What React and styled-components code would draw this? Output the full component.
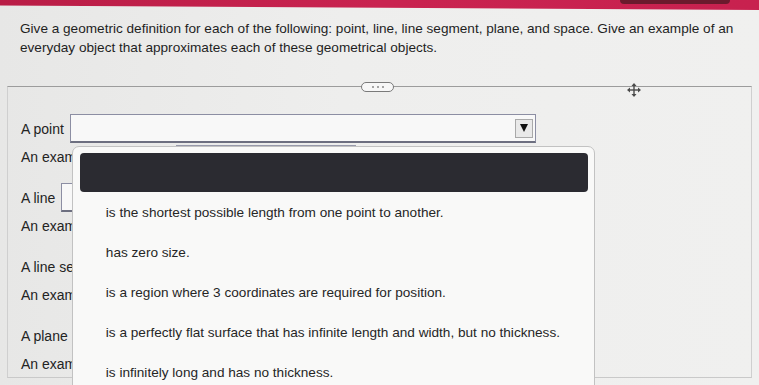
import React from "react";
import styled, { createGlobalStyle } from "styled-components";

const GlobalStyle = createGlobalStyle`
  html, body {
    margin: 0;
    padding: 0;
    overflow: hidden;
  }
  body {
    width: 759px;
    height: 385px;
    background: linear-gradient(90deg, #e7e7e6 0%, #eeeeed 45%, #f0f0ef 100%);
    font-family: "Liberation Sans", Arial, sans-serif;
    color: #222;
  }
`;

const Screen = styled.div`
  width: 759px;
  height: 385px;
  display: flex;
  flex-direction: column;
`;

const TopBar = styled.div`
  height: 10px;
  flex: none;
  display: flex;
  justify-content: flex-end;
  padding-right: 29px;
  background: linear-gradient(90deg, #b91d46 0%, #c92350 50%, #c8214f 100%);
  clip-path: polygon(0 0, 100% 0, 100% 100%, 0 55%);
`;

const TopTab = styled.div`
  width: 110px;
  height: 4px;
  background: #6b1a2d;
  border-radius: 0 0 6px 6px;
`;

const Question = styled.p`
  margin: 9px 0 0 20px;
  font-size: 13.6px;
  line-height: 19px;
  color: #1f1f1f;
`;

const Panel = styled.div`
  position: relative;
  margin: 29px 0 0 7px;
  width: 745px;
  height: 292px;
  box-sizing: border-box;
  border-top: 1px solid #9c9c9c;
  border-left: 1px solid #cfcfcf;
  border-right: 1px solid #cfcfcf;
  border-bottom: 1px solid #c9c9c9;
  padding: 27px 0 0 13px;
  display: flex;
  flex-direction: column;
  gap: 13px;
`;

const Pill = styled.div`
  position: absolute;
  top: -5px;
  left: 353px;
  width: 31px;
  height: 8px;
  border: 1px solid #7a7a7a;
  border-radius: 5px;
  background: #f7f7f7;
  display: flex;
  align-items: center;
  justify-content: center;
  gap: 3px;
`;

const Dot = styled.span`
  width: 2px;
  height: 2px;
  border-radius: 50%;
  background: #888;
`;

const MoveHandle = styled.svg`
  position: absolute;
  top: -4px;
  left: 619px;
`;

const Group = styled.div`
  display: flex;
  flex-direction: column;
`;

const FieldRow = styled.div`
  display: flex;
  align-items: center;
  gap: 6px;
  height: ${(p) => p.$h}px;
`;

const Label = styled.span`
  font-size: 14px;
  color: #232323;
  white-space: nowrap;
  flex: none;
`;

const SelectWrap = styled.div`
  position: relative;
  flex: none;
`;

const SelectBox = styled.div`
  width: ${(p) => p.$w}px;
  height: 29px;
  box-sizing: border-box;
  border: 1px solid #8c8ea3;
  border-bottom: 2px solid #6d6f80;
  background: #f8f8f8;
  display: flex;
  align-items: center;
  justify-content: flex-end;
  padding-right: 2px;
`;

const ArrowButton = styled.div`
  width: 18px;
  height: 19px;
  box-sizing: border-box;
  border: 1px solid #a9a9a9;
  background: #e9e9e9;
  display: flex;
  align-items: center;
  justify-content: center;
`;

const Triangle = styled.span`
  width: 0;
  height: 0;
  border-left: 4px solid transparent;
  border-right: 4px solid transparent;
  border-top: 8px solid #111;
`;

const BlankBox = styled.div`
  width: ${(p) => p.$w}px;
  height: 24px;
  box-sizing: border-box;
  border: 1px solid #9799ab;
  background: #f8f8f8;
`;

const Popup = styled.div`
  position: absolute;
  top: calc(100% + 3px);
  left: 2px;
  width: 523px;
  height: 250px;
  box-sizing: border-box;
  z-index: 10;
  background: #f9f9f8;
  border: 1px solid #c2c2c2;
  border-radius: 7px 7px 0 0;
  padding: 6px 6px 0 7px;
  display: flex;
  flex-direction: column;
`;

const ActiveOption = styled.div`
  height: 39px;
  flex: none;
  background: #2b2b31;
  border-radius: 4px;
`;

const Option = styled.div`
  height: 40px;
  flex: none;
  display: flex;
  align-items: center;
  padding-left: 26px;
  font-size: 13.6px;
  color: #262626;
  white-space: nowrap;
`;

const options = [
  "is the shortest possible length from one point to another.",
  "has zero size.",
  "is a region where 3 coordinates are required for position.",
  "is a perfectly flat surface that has infinite length and width, but no thickness.",
  "is infinitely long and has no thickness.",
];

const groups = [
  { label: "A point", example: "An example of a point is", open: true },
  { label: "A line", example: "An example of a line is" },
  { label: "A line segment", example: "An example of a line segment is" },
  { label: "A plane", example: "An example of a plane is" },
];

function Field({ label, open }) {
  return (
    <FieldRow $h={29}>
      <Label>{label}</Label>
      <SelectWrap>
        <SelectBox $w={466}>
          <ArrowButton>
            <Triangle />
          </ArrowButton>
        </SelectBox>
        {open && (
          <Popup>
            <ActiveOption />
            {options.map((o) => (
              <Option key={o}>{o}</Option>
            ))}
          </Popup>
        )}
      </SelectWrap>
    </FieldRow>
  );
}

export default function App() {
  return (
    <>
      <GlobalStyle />
      <Screen>
        <TopBar>
          <TopTab />
        </TopBar>
        <Question>
          Give a geometric definition for each of the following: point, line, line segment, plane, and space. Give an example of an
          <br />
          everyday object that approximates each of these geometrical objects.
        </Question>
        <Panel>
          <Pill>
            <Dot />
            <Dot />
            <Dot />
          </Pill>
          <MoveHandle width="14" height="14" viewBox="0 0 14 14">
            <g fill="none" stroke="#4a4a4a" strokeWidth="1.4">
              <line x1="7" y1="1.5" x2="7" y2="12.5" />
              <line x1="1.5" y1="7" x2="12.5" y2="7" />
            </g>
            <g fill="#4a4a4a">
              <polygon points="7,0 4.5,3 9.5,3" />
              <polygon points="7,14 4.5,11 9.5,11" />
              <polygon points="0,7 3,4.5 3,9.5" />
              <polygon points="14,7 11,4.5 11,9.5" />
            </g>
          </MoveHandle>
          {groups.map((g) => (
            <Group key={g.label}>
              <Field label={g.label} open={g.open} />
              <FieldRow $h={27}>
                <Label>{g.example}</Label>
                <BlankBox $w={180} />
              </FieldRow>
            </Group>
          ))}
        </Panel>
      </Screen>
    </>
  );
}
